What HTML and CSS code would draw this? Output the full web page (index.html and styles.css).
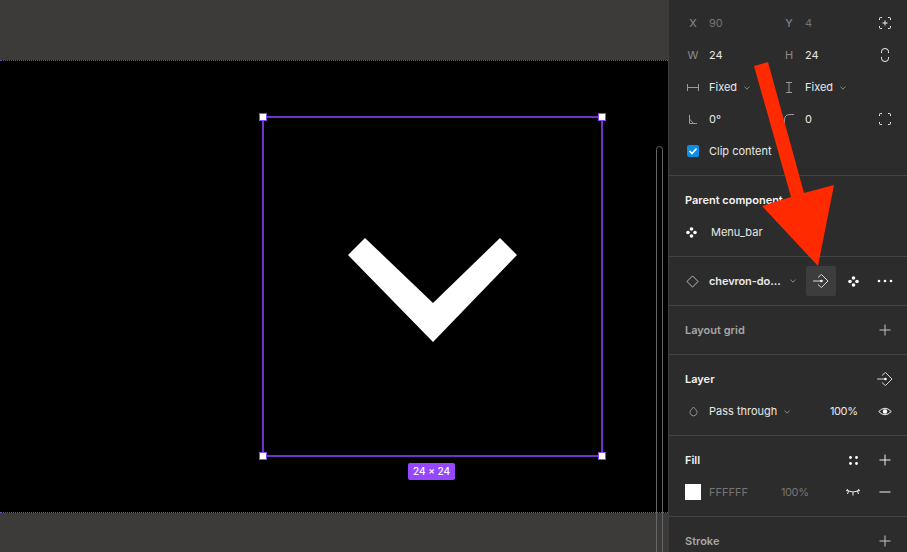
FILE: index.html
```html
<!DOCTYPE html>
<html>
<head>
<meta charset="utf-8">
<title>Figma instance</title>
<link rel="stylesheet" href="styles.css">
</head>
<body>
<div class="page">
	<div class="canvas">
		<div class="band"></div>
		<div class="frame">
			<div class="selection">
				<span class="handle tl"></span>
				<span class="handle tr"></span>
				<span class="handle bl"></span>
				<span class="handle br"></span>
				<svg class="chevron" width="169" height="104" viewBox="0 0 169 104"><polygon points="0,17 17,0 85,65 152,0 169,17 85,104" fill="#fff"/></svg>
				<div class="size-tag">24 × 24</div>
			</div>
			<div class="scroll-pill"></div>
		</div>
		<div class="band"></div>
	</div>

	<div class="panel">
		<div class="section first">
			<div class="row">
				<span class="lbl">X</span><span class="val muted">90</span>
				<span class="lbl">Y</span><span class="val2 muted">4</span>
				<span class="end"><svg width="12" height="12" viewBox="0 0 12 12"><path d="M.5 3V1.500q0-1 1-1H3M9 .5h1.500q1 0 1 1V3M11.500 9v1.500q0 1-1 1H9M3 11.500H1.500q-1 0-1-1V9M6 3.500v5M3.500 6h5" class="ln"/></svg></span>
			</div>
			<div class="row">
				<span class="lbl">W</span><span class="val">24</span>
				<span class="lbl">H</span><span class="val2">24</span>
				<span class="end"><svg width="8" height="14" viewBox="0 0 8 14"><path d="M.5 5V3.500a3.500 3 0 0 1 7 0V5M.5 9v1.500a3.500 3 0 0 0 7 0V9" class="ln"/></svg></span>
			</div>
			<div class="row">
				<span class="lbl"><svg width="12" height="7" viewBox="0 0 12 7"><path d="M.5 0v7M11.500 0v7M1 3.500h10" class="ln-dim"/></svg></span>
				<span class="val">Fixed<svg class="caret" width="6" height="4" viewBox="0 0 6 4"><path d="M.4 .5 3 3.200 5.600 .5" class="ln-faint"/></svg></span>
				<span class="lbl"><svg width="6" height="11" viewBox="0 0 6 11"><path d="M0 .5h6M0 10.500h6M3 1v9" class="ln-dim"/></svg></span>
				<span class="val2">Fixed<svg class="caret" width="6" height="4" viewBox="0 0 6 4"><path d="M.4 .5 3 3.200 5.600 .5" class="ln-faint"/></svg></span>
			</div>
			<div class="row">
				<span class="lbl"><svg width="8" height="9" viewBox="0 0 8 9"><path d="M.5 0v8.500H8M.5 4 4.500 8.500" class="ln-dim"/></svg></span>
				<span class="val">0°</span>
				<span class="lbl"><svg width="10" height="10" viewBox="0 0 10 10"><path d="M.5 10V6Q.5 .5 6 .5h4" class="ln-dim"/></svg></span>
				<span class="val2">0</span>
				<span class="end"><svg width="12" height="12" viewBox="0 0 12 12"><path d="M.5 3V1.500q0-1 1-1H3M9 .5h1.500q1 0 1 1V3M11.500 9v1.500q0 1-1 1H9M3 11.500H1.500q-1 0-1-1V9" class="ln"/></svg></span>
			</div>
			<div class="row">
				<span class="check"><svg width="12" height="12" viewBox="0 0 12 12"><path d="M2.500 6 5 8.500 9.500 3.500" fill="none" stroke="#fff" stroke-width="1.600"/></svg></span>
				<span class="val">Clip content</span>
			</div>
		</div>

		<div class="section">
			<div class="row"><span class="title">Parent component</span></div>
			<div class="row">
				<span class="lbl nudge"><svg width="11" height="11" viewBox="0 0 11 11"><circle cx="5.500" cy="2" r="1.800" fill="#fff"/><circle cx="2" cy="5.500" r="1.800" fill="#fff"/><circle cx="9" cy="5.500" r="1.800" fill="#fff"/><circle cx="5.500" cy="9" r="1.800" fill="#fff"/></svg></span>
				<span class="val shift">Menu_bar</span>
			</div>
		</div>

		<div class="section">
			<div class="row">
				<span class="lbl nudge-small"><svg width="13" height="13" viewBox="0 0 14 14"><path d="M7 1 13 7 7 13 1 7Z" class="ln-soft"/></svg></span>
				<span class="name">chevron-do…</span>
				<span class="small-caret"><svg width="6" height="4" viewBox="0 0 6 4"><path d="M.4 .5 3 3.200 5.600 .5" class="ln-faint"/></svg></span>
				<span class="goto"><svg width="16" height="14" viewBox="0 0 18 16"><path d="M0 8H10M5.500 4 9.500 .5 17 8 9.500 15.500 5.500 12" class="ln"/><circle cx="9.500" cy="8" r="1.500" fill="#fff"/></svg></span>
				<span class="act"><svg width="11" height="11" viewBox="0 0 11 11"><circle cx="5.500" cy="2" r="1.800" fill="#fff"/><circle cx="2" cy="5.500" r="1.800" fill="#fff"/><circle cx="9" cy="5.500" r="1.800" fill="#fff"/><circle cx="5.500" cy="9" r="1.800" fill="#fff"/></svg></span>
				<span class="end"><svg width="16" height="4" viewBox="0 0 16 4"><circle cx="2" cy="2" r="1.300" fill="#fff"/><circle cx="8" cy="2" r="1.300" fill="#fff"/><circle cx="14" cy="2" r="1.300" fill="#fff"/></svg></span>
			</div>
		</div>

		<div class="section">
			<div class="row">
				<span class="title dim">Layout grid</span>
				<span class="end push"><svg width="12" height="12" viewBox="0 0 12 12"><path d="M6 .5v11M.5 6h11" class="ln-soft"/></svg></span>
			</div>
		</div>

		<div class="section">
			<div class="row">
				<span class="title">Layer</span>
				<span class="end push"><svg width="16" height="14" viewBox="0 0 18 16"><path d="M0 8H10M5.500 4 9.500 .5 17 8 9.500 15.500 5.500 12" class="ln"/><circle cx="9.500" cy="8" r="1.500" fill="#fff"/></svg></span>
			</div>
			<div class="row">
				<span class="lbl"><svg width="9" height="11" viewBox="0 0 10 12"><path d="M5 1 7.800 4.200A3.900 3.900 0 1 1 2.200 4.200Z" class="ln-dim"/></svg></span>
				<span class="val blend">Pass through<svg class="caret" width="6" height="4" viewBox="0 0 6 4"><path d="M.4 .5 3 3.200 5.600 .5" class="ln-faint"/></svg></span>
				<span class="pct">100%</span>
				<span class="end"><svg width="14" height="9" viewBox="0 0 14 9"><path d="M.7 4.500Q7 -2 13.300 4.500 7 11 .7 4.500Z" class="ln"/><circle cx="7" cy="4.500" r="2.200" fill="#fff"/></svg></span>
			</div>
		</div>

		<div class="section">
			<div class="row">
				<span class="title">Fill</span>
				<span class="act push"><svg width="9" height="9" viewBox="0 0 9 9"><circle cx="1.500" cy="1.500" r="1.400" fill="#fff"/><circle cx="7.500" cy="1.500" r="1.400" fill="#fff"/><circle cx="1.500" cy="7.500" r="1.400" fill="#fff"/><circle cx="7.500" cy="7.500" r="1.400" fill="#fff"/></svg></span>
				<span class="end"><svg width="12" height="12" viewBox="0 0 12 12"><path d="M6 .5v11M.5 6h11" class="ln"/></svg></span>
			</div>
			<div class="row">
				<span class="swatch"></span>
				<span class="val muted">FFFFFF</span>
				<span class="muted tight">100%</span>
				<span class="act push"><svg width="14" height="8" viewBox="0 0 14 8"><path d="M0 2.500Q7 5.500 14 2.500M2.500 3.200 1 1M2.500 3.200 1.500 6M7 4.200V7.500M11.500 3.200 13 1M11.500 3.200 12.500 6" class="ln"/></svg></span>
				<span class="end"><svg width="12" height="2" viewBox="0 0 12 2"><path d="M.5 1h11" class="ln"/></svg></span>
			</div>
		</div>

		<div class="section">
			<div class="row">
				<span class="title dim">Stroke</span>
				<span class="end push"><svg width="12" height="12" viewBox="0 0 12 12"><path d="M6 .5v11M.5 6h11" class="ln-soft"/></svg></span>
			</div>
		</div>
	</div>

	<svg class="arrow" width="907" height="552" viewBox="0 0 907 552"><polygon points="754,66 768,62 804,193 834,185 818,266 762,206 791,197" fill="#ff2a00"/></svg>
</div>
</body>
</html>
```

FILE: styles.css
```css
html, body {
  margin: 0;
  height: 100%;
  overflow: hidden;
  background: #2c2c2c;
}

body {
  font-family: Inter, "Liberation Sans", sans-serif;
  font-size: 11px;
  color: #e8e8e8;
}

.page {
  position: relative;
  display: flex;
  width: 907px;
  height: 552px;
  overflow: hidden;
}

/* Canvas */
.canvas {
  width: 668px;
  display: flex;
  flex-direction: column;
  flex-shrink: 0;
}

.band {
  height: 60px;
  flex-shrink: 0;
  background: #3c3b39;
}

.band:last-child {
  height: 39px;
}

.frame {
  position: relative;
  flex: 1;
  background: #000;
  border-top: 1px dotted #7b3fe4;
  border-bottom: 1px dotted #7b3fe4;
}

.selection {
  position: absolute;
  left: 262px;
  top: 55px;
  width: 337px;
  height: 337px;
  border: 2px solid #7030cc;
}

.handle {
  position: absolute;
  width: 6px;
  height: 6px;
  background: #fff;
  border: 1.500px solid #8a4cf0;
}

.tl { left: -5px; top: -5px; }
.tr { right: -5px; top: -5px; }
.bl { left: -5px; bottom: -5px; }
.br { right: -5px; bottom: -5px; }

.chevron {
  position: absolute;
  left: 84px;
  top: 120px;
}

.size-tag {
  position: absolute;
  left: 144px;
  top: 345px;
  width: 47px;
  height: 17px;
  line-height: 17px;
  text-align: center;
  background: #9747ff;
  border-radius: 2px;
  color: #fff;
  font-size: 10px;
  font-weight: 500;
}

.scroll-pill {
  position: absolute;
  left: 656px;
  top: 85px;
  width: 5px;
  height: 500px;
  border: 1px solid #666;
  border-radius: 4px;
}

/* Right panel */
.panel {
  flex: 1;
  border-left: 1px solid #3d3d3d;
}

.section {
  padding: 8px 0;
  border-bottom: 1px solid #444;
}

.section.first {
  padding-top: 7px;
}

.section:last-child {
  border-bottom: none;
}

.row {
  display: flex;
  align-items: center;
  height: 32px;
  padding: 0 10px 0 16px;
}

.lbl {
  width: 16px;
  margin-right: 8px;
  display: flex;
  justify-content: center;
  color: #8c8c8c;
}

.nudge {
  margin-left: -2px;
  margin-right: 10px;
}

.nudge-small {
  margin-left: -1px;
  margin-right: 9px;
}

.val {
  width: 72px;
  flex-shrink: 0;
  white-space: nowrap;
}

.val2 {
  width: 68px;
  flex-shrink: 0;
  white-space: nowrap;
}

.shift {
  margin-left: 2px;
}

.blend {
  width: 121px;
}

.pct {
  width: 43px;
  letter-spacing: -0.4px;
}

.muted {
  color: #757575;
}

.tight {
  letter-spacing: -0.4px;
}

.title {
  font-weight: 600;
  color: #f2f2f2;
  white-space: nowrap;
}

.title.dim {
  color: #a6a6a6;
}

.name {
  width: 76px;
  font-weight: 600;
  white-space: nowrap;
  letter-spacing: -0.1px;
}

.small-caret {
  width: 16px;
  display: flex;
  justify-content: center;
}

.caret {
  margin-left: 7px;
  vertical-align: 1px;
}

.end, .act {
  width: 24px;
  display: flex;
  justify-content: center;
  align-items: center;
  flex-shrink: 0;
}

.act {
  margin-right: 8px;
}

.push {
  margin-left: auto;
}

.goto {
  width: 30px;
  height: 30px;
  margin: 0 5px;
  display: flex;
  justify-content: center;
  align-items: center;
  background: #3d3d3d;
  border-radius: 2px;
}

.check {
  width: 12px;
  height: 12px;
  margin-left: 2px;
  margin-right: 10px;
  background: #0d8ce9;
  border-radius: 2px;
  display: block;
}

.check svg {
  display: block;
}

.swatch {
  width: 16px;
  height: 16px;
  margin-right: 8px;
  background: #fff;
}

/* Icon strokes */
.ln, .ln-soft, .ln-dim, .ln-faint {
  fill: none;
  stroke-width: 1;
}

.ln { stroke: #f0f0f0; }
.ln-soft { stroke: #c4c4c4; }
.ln-dim { stroke: #9a9a9a; }
.ln-faint { stroke: #8a8a8a; }

.arrow {
  position: absolute;
  left: 0;
  top: 0;
  pointer-events: none;
}
```
